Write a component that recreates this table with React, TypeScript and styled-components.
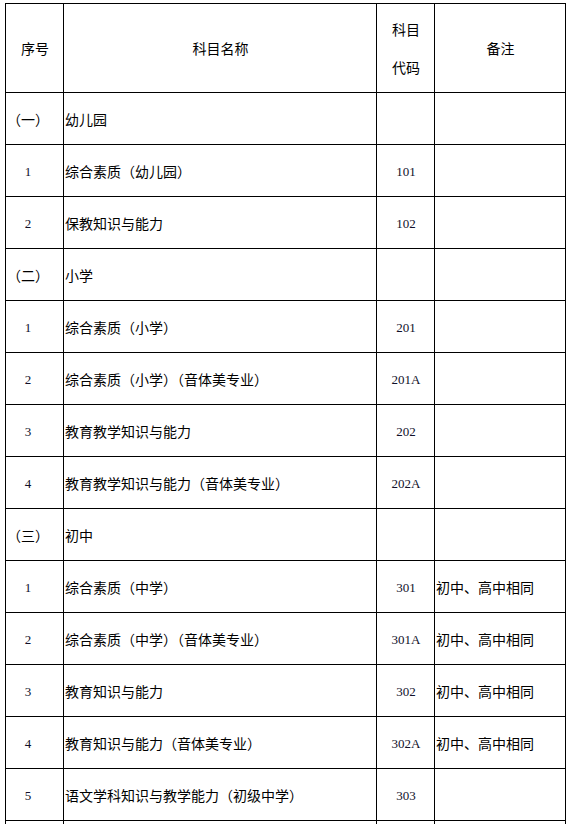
import React from "react";
import styled, { createGlobalStyle } from "styled-components";

// ------------------- Data -------------------

type Row =
  | { kind: "group"; no: string; name: string }
  | { kind: "item"; no: string; name: string; code: string; note?: string };

const rows: Row[] = [
  { kind: "group", no: "（一）", name: "幼儿园" },
  { kind: "item", no: "1", name: "综合素质（幼儿园）", code: "101" },
  { kind: "item", no: "2", name: "保教知识与能力", code: "102" },
  { kind: "group", no: "（二）", name: "小学" },
  { kind: "item", no: "1", name: "综合素质（小学）", code: "201" },
  { kind: "item", no: "2", name: "综合素质（小学）（音体美专业）", code: "201A" },
  { kind: "item", no: "3", name: "教育教学知识与能力", code: "202" },
  { kind: "item", no: "4", name: "教育教学知识与能力（音体美专业）", code: "202A" },
  { kind: "group", no: "（三）", name: "初中" },
  { kind: "item", no: "1", name: "综合素质（中学）", code: "301", note: "初中、高中相同" },
  { kind: "item", no: "2", name: "综合素质（中学）（音体美专业）", code: "301A", note: "初中、高中相同" },
  { kind: "item", no: "3", name: "教育知识与能力", code: "302", note: "初中、高中相同" },
  { kind: "item", no: "4", name: "教育知识与能力（音体美专业）", code: "302A", note: "初中、高中相同" },
  { kind: "item", no: "5", name: "语文学科知识与教学能力（初级中学）", code: "303" },
];

// ------------------- Styled Components -------------------

const GlobalStyle = createGlobalStyle`
  html, body {
    margin: 0;
    padding: 0;
    background: #fff;
  }
  body {
    font-family: "Noto Sans CJK SC", "Liberation Sans", sans-serif;
    color: #000;
  }
`;

const Page = styled.div`
  padding: 3px 0 0 5px;
  height: 824px;
  overflow: hidden;
`;

const Table = styled.table`
  border-collapse: collapse;
  table-layout: fixed;
  width: 560px;
`;

const Cell = styled.td<{ $align?: "left" | "center"; $padRight?: number }>`
  border: 1px solid #000;
  height: 51px;
  padding: 0 ${(p) => p.$padRight ?? 0}px 0 1px;
  text-align: ${(p) => p.$align ?? "center"};
  vertical-align: middle;
  font-size: 14px;
  font-weight: normal;
  line-height: 18px;
  white-space: nowrap;
`;

const HeadCell = styled(Cell)`
  height: 88px;
  line-height: 38px;
`;

const Num = styled.span`
  font-family: "Liberation Serif", serif;
  font-size: 13px;
  color: #10102a;
`;

// ------------------- Component -------------------

export default function App(): JSX.Element {
  return (
    <Page>
      <GlobalStyle />
      <Table>
        <colgroup>
          <col style={{ width: 58 }} />
          <col style={{ width: 313 }} />
          <col style={{ width: 58 }} />
          <col style={{ width: 131 }} />
        </colgroup>
        <thead>
          <tr>
            <HeadCell as="th">序号</HeadCell>
            <HeadCell as="th">科目名称</HeadCell>
            <HeadCell as="th">
              科目
              <br />
              代码
            </HeadCell>
            <HeadCell as="th">备注</HeadCell>
          </tr>
        </thead>
        <tbody>
          {rows.map((r, i) =>
            r.kind === "group" ? (
              <tr key={i}>
                <Cell $padRight={14}>{r.no}</Cell>
                <Cell $align="left">{r.name}</Cell>
                <Cell />
                <Cell />
              </tr>
            ) : (
              <tr key={i}>
                <Cell $padRight={14}>
                  <Num>{r.no}</Num>
                </Cell>
                <Cell $align="left">{r.name}</Cell>
                <Cell>
                  <Num>{r.code}</Num>
                </Cell>
                <Cell $align="left">{r.note}</Cell>
              </tr>
            )
          )}
          <tr>
            <Cell />
            <Cell />
            <Cell />
            <Cell />
          </tr>
        </tbody>
      </Table>
    </Page>
  );
}
